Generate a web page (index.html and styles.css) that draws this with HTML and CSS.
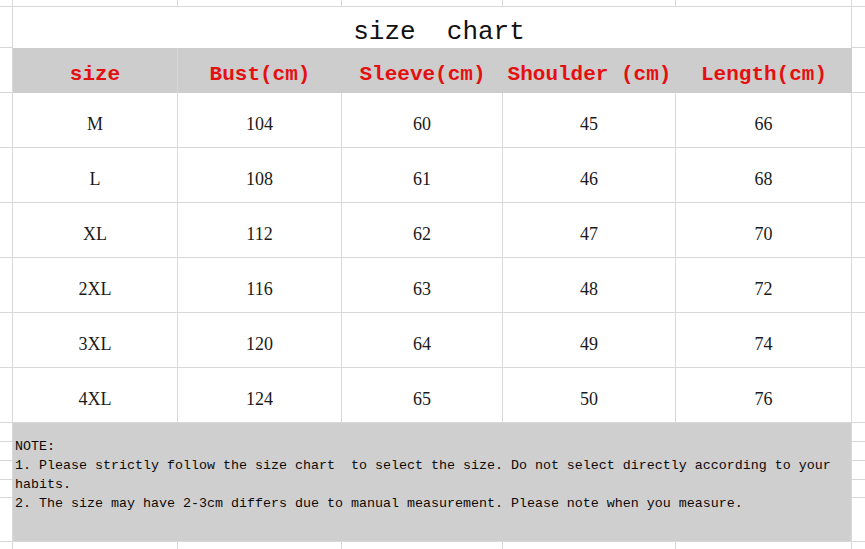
FILE: index.html
```html
<!DOCTYPE html>
<html>
<head>
<meta charset="utf-8">
<link rel="stylesheet" href="styles.css">
</head>
<body>
<div class="sheet">
  <div class="c strip"></div><div class="c strip"></div><div class="c strip"></div><div class="c strip"></div><div class="c strip"></div><div class="c strip"></div><div class="c strip last"></div>

  <div class="c mg"></div>
  <div class="c title">size&nbsp;&nbsp;chart</div>
  <div class="c mg last"></div>

  <div class="c mg"></div>
  <div class="c hd">size</div>
  <div class="c hd">Bust(cm)</div>
  <div class="c hd">Sleeve(cm)</div>
  <div class="c hd">Shoulder (cm)</div>
  <div class="c hd">Length(cm)</div>
  <div class="c mg last"></div>

  <div class="c mg"></div><div class="c td">M</div><div class="c td">104</div><div class="c td">60</div><div class="c td">45</div><div class="c td">66</div><div class="c mg last"></div>
  <div class="c mg"></div><div class="c td">L</div><div class="c td">108</div><div class="c td">61</div><div class="c td">46</div><div class="c td">68</div><div class="c mg last"></div>
  <div class="c mg"></div><div class="c td">XL</div><div class="c td">112</div><div class="c td">62</div><div class="c td">47</div><div class="c td">70</div><div class="c mg last"></div>
  <div class="c mg"></div><div class="c td">2XL</div><div class="c td">116</div><div class="c td">63</div><div class="c td">48</div><div class="c td">72</div><div class="c mg last"></div>
  <div class="c mg"></div><div class="c td">3XL</div><div class="c td">120</div><div class="c td">64</div><div class="c td">49</div><div class="c td">74</div><div class="c mg last"></div>
  <div class="c mg"></div><div class="c td">4XL</div><div class="c td">124</div><div class="c td">65</div><div class="c td">50</div><div class="c td">76</div><div class="c mg last"></div>

  <div class="c mgn"><div class="sub s19"></div><div class="sub s19"></div><div class="sub s19"></div><div class="sub s18"></div><div class="sub s44"></div></div>
  <div class="c note">NOTE:<br>1. Please strictly follow the size chart&nbsp; to select the size. Do not select directly according to your<br>habits.<br>2. The size may have 2-3cm differs due to manual measurement. Please note when you measure.</div>
  <div class="c mgn last"><div class="sub s19"></div><div class="sub s19"></div><div class="sub s19"></div><div class="sub s18"></div><div class="sub s44"></div></div>

  <div class="c bot"></div><div class="c bot"></div><div class="c bot"></div><div class="c bot"></div><div class="c bot"></div><div class="c bot"></div><div class="c bot last"></div>
</div>
</body>
</html>
```
FILE: styles.css
```css
html, body {
  margin: 0;
  padding: 0;
  background: #ffffff;
}
.sheet {
  width: 865px;
  height: 549px;
  display: grid;
  grid-template-columns: 13px 165px 164px 161px 173px 176px 13px;
  grid-template-rows: 7px 41px 45px 55px 55px 55px 55px 55px 55px 119px 7px;
  overflow: hidden;
}
.c {
  box-sizing: border-box;
  border-right: 1px solid #d8d8d8;
  border-bottom: 1px solid #d8d8d8;
}
.last {
  border-right: none;
}
.bot {
  border-bottom: none;
}
.title {
  grid-column: span 5;
  border-bottom: none;
  display: flex;
  align-items: center;
  justify-content: center;
  padding-top: 9px;
  padding-left: 14px;
  font-family: "Liberation Mono", "DejaVu Sans Mono", monospace;
  font-size: 26px;
  color: #111111;
  white-space: nowrap;
}
.hd {
  background: #cdcdcd;
  border-right: none;
  border-bottom: none;
  display: flex;
  align-items: center;
  justify-content: center;
  padding-top: 8px;
  font-family: "Liberation Mono", "DejaVu Sans Mono", monospace;
  font-weight: bold;
  font-size: 21px;
  color: #e41010;
  white-space: nowrap;
}
.hd:nth-child(10) {
  padding-left: 2px;
}
.hd:nth-child(12) {
  border-right: 1px solid #d8d8d8;
}
.td {
  display: flex;
  align-items: center;
  justify-content: center;
  padding-top: 9px;
  font-family: "Liberation Serif", "Times New Roman", serif;
  font-size: 18px;
  color: #1a1a1a;
}
.note {
  grid-column: span 5;
  background: #d0cfcf;
  padding: 14px 0 0 2px;
  font-family: "Liberation Mono", "DejaVu Sans Mono", monospace;
  font-size: 13.33px;
  line-height: 19px;
  color: #0a0a0a;
  white-space: nowrap;
}
.mgn {
  display: flex;
  flex-direction: column;
}
.sub {
  box-sizing: border-box;
  border-bottom: 1px solid #d8d8d8;
}
.sub:last-child {
  border-bottom: none;
}
.s19 { height: 19px; }
.s18 { height: 18px; }
.s44 { flex: 1; }
```
